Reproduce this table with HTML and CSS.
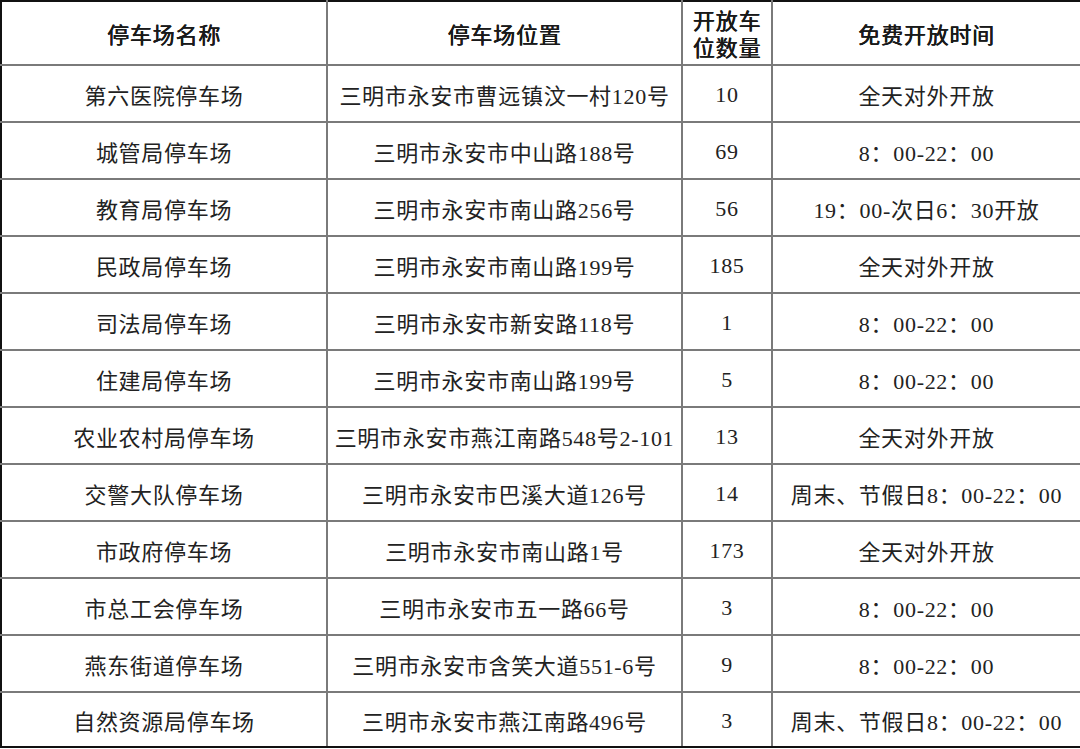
FILE: index.html
```html
<!DOCTYPE html>
<html lang="zh-CN">
<head>
<meta charset="utf-8">
<title>停车场</title>
<link rel="stylesheet" href="styles.css">
</head>
<body>
<table class="parking">
  <colgroup>
    <col class="c-name"><col class="c-addr"><col class="c-num"><col class="c-time">
  </colgroup>
  <thead>
    <tr>
      <th>停车场名称</th>
      <th>停车场位置</th>
      <th class="th-num"><span class="hl">开放车</span><span class="hl">位数量</span></th>
      <th>免费开放时间</th>
    </tr>
  </thead>
  <tbody>
    <tr><td>第六医院停车场</td><td>三明市永安市曹远镇汶一村120号</td><td class="num">10</td><td>全天对外开放</td></tr>
    <tr><td>城管局停车场</td><td>三明市永安市中山路188号</td><td class="num">69</td><td>8：00-22：00</td></tr>
    <tr><td>教育局停车场</td><td>三明市永安市南山路256号</td><td class="num">56</td><td>19：00-次日6：30开放</td></tr>
    <tr><td>民政局停车场</td><td>三明市永安市南山路199号</td><td class="num">185</td><td>全天对外开放</td></tr>
    <tr><td>司法局停车场</td><td>三明市永安市新安路118号</td><td class="num">1</td><td>8：00-22：00</td></tr>
    <tr><td>住建局停车场</td><td>三明市永安市南山路199号</td><td class="num">5</td><td>8：00-22：00</td></tr>
    <tr><td>农业农村局停车场</td><td>三明市永安市燕江南路548号2-101</td><td class="num">13</td><td>全天对外开放</td></tr>
    <tr><td>交警大队停车场</td><td>三明市永安市巴溪大道126号</td><td class="num">14</td><td>周末、节假日8：00-22：00</td></tr>
    <tr><td>市政府停车场</td><td>三明市永安市南山路1号</td><td class="num">173</td><td>全天对外开放</td></tr>
    <tr><td>市总工会停车场</td><td>三明市永安市五一路66号</td><td class="num">3</td><td>8：00-22：00</td></tr>
    <tr><td>燕东街道停车场</td><td>三明市永安市含笑大道551-6号</td><td class="num">9</td><td>8：00-22：00</td></tr>
    <tr class="last"><td>自然资源局停车场</td><td>三明市永安市燕江南路496号</td><td class="num">3</td><td>周末、节假日8：00-22：00</td></tr>
  </tbody>
</table>
</body>
</html>
```
FILE: styles.css
```css
html, body {
  margin: 0;
  padding: 0;
  background: #ffffff;
}

.parking {
  width: 1080px;
  border-collapse: collapse;
  table-layout: fixed;
  border: 2px solid #111111;
  font-family: "Liberation Serif", "Noto Sans CJK SC", serif;
  font-size: 22px;
  color: #222222;
}

.c-name { width: 326px; }
.c-addr { width: 355px; }
.c-num { width: 90px; }
.c-time { width: 309px; }

.parking th,
.parking td {
  border: 2px solid #7a7a7a;
  text-align: center;
  vertical-align: middle;
  padding: 0;
  white-space: nowrap;
}

.parking th {
  height: 62px;
  font-family: "Noto Sans CJK SC", sans-serif;
  font-weight: 400;
  text-shadow: 0.5px 0 0 #1a1a1a, 0 0.3px 0 #1a1a1a;
  font-size: 22px;
  color: #1a1a1a;
  letter-spacing: 0.8px;
  line-height: 26px;
}

.parking .th-num .hl {
  display: block;
  line-height: 27px;
}

.parking td {
  height: 55px;
  letter-spacing: 0.7px;
}

.parking td.num {
  line-height: 24px;
  padding-top: 2px;
  height: 53px;
}

.parking tr.last td {
  height: 53px;
}

.parking tr.last td.num {
  height: 51px;
}

.parking thead tr:first-child th { border-top-color: #111111; }
.parking tr > :first-child { border-left-color: #111111; }
.parking tr > :last-child { border-right-color: #111111; }
.parking tbody tr:last-child td { border-bottom-color: #111111; }
```
